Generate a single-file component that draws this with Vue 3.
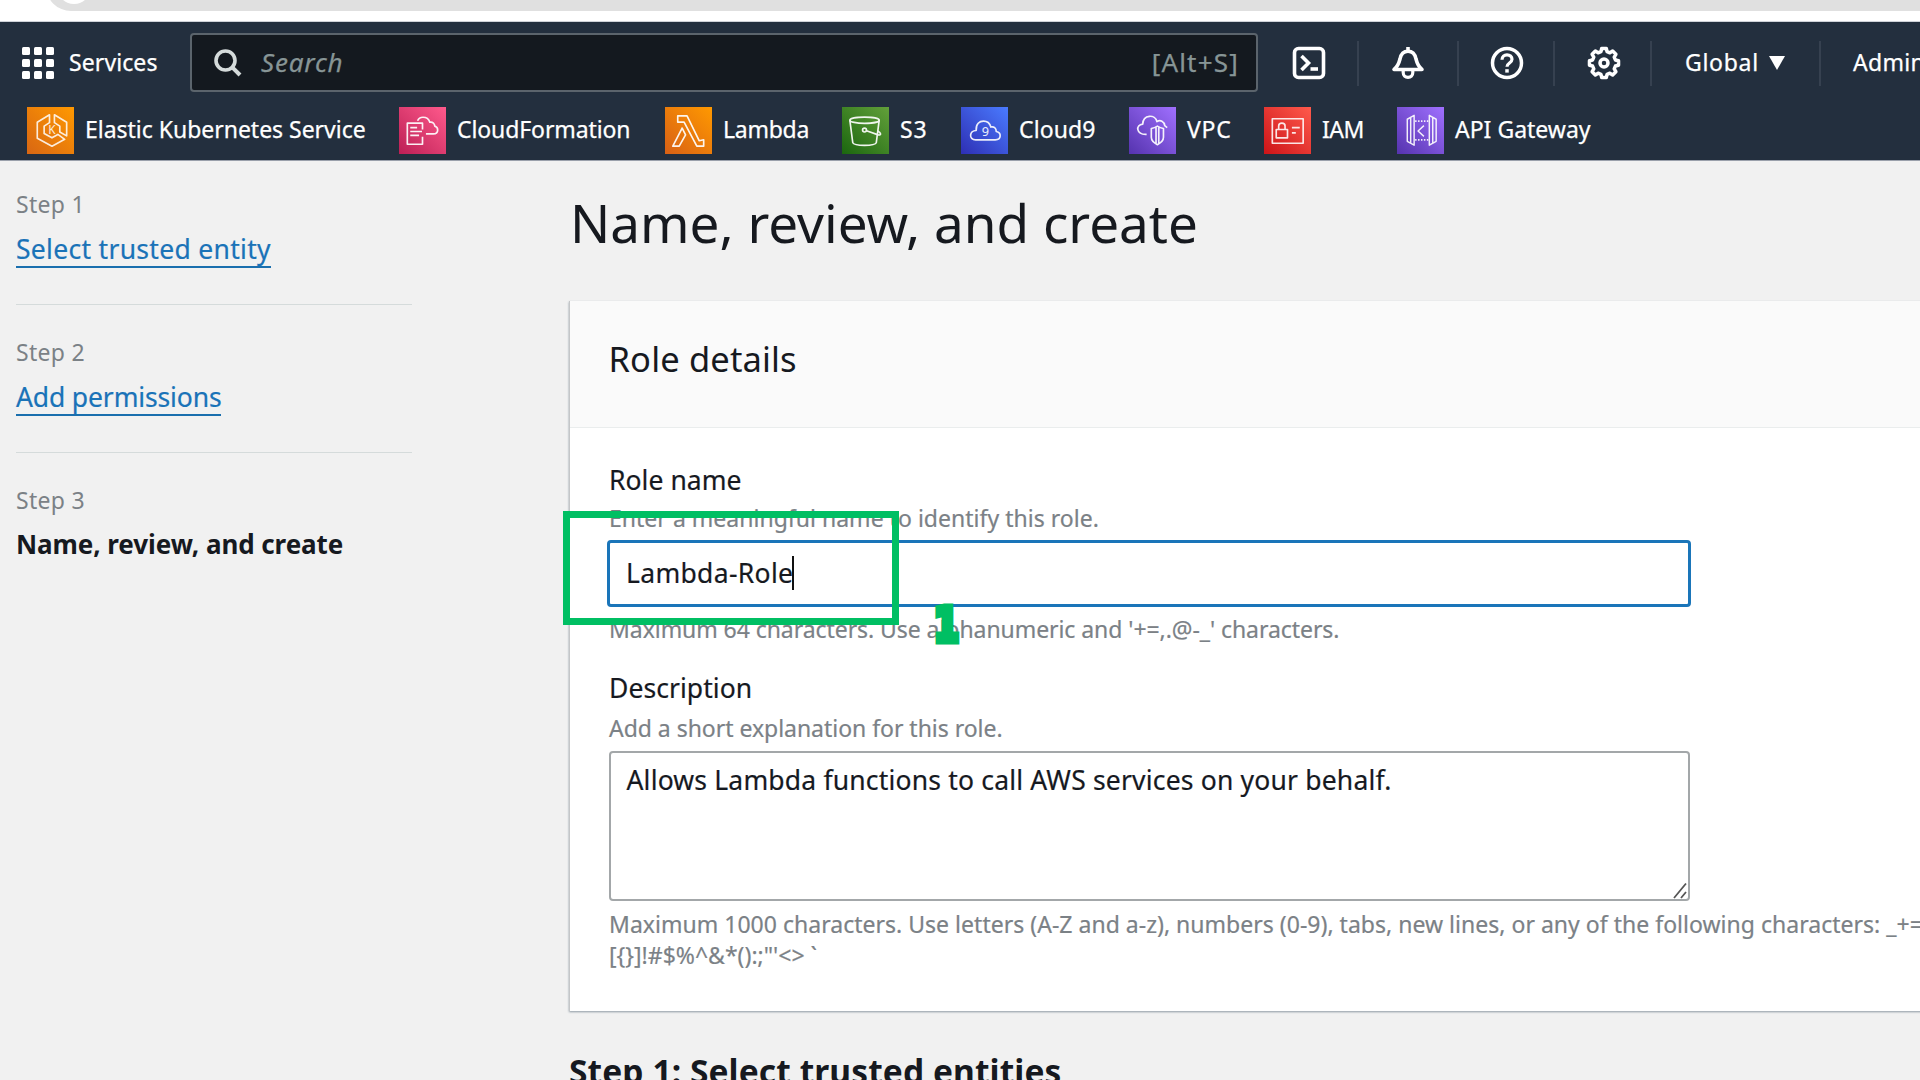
<script setup>
const services = [
  { key: 'eks', label: 'Elastic Kubernetes Service', width: 372, from: '#d86613', to: '#ff9900', spacing: -0.02 },
  { key: 'cfn', label: 'CloudFormation', width: 266, from: '#bc1f55', to: '#ff5a8c', spacing: -0.1 },
  { key: 'lambda', label: 'Lambda', width: 177, from: '#d86015', to: '#ff9900', spacing: -0.25 },
  { key: 's3', label: 'S3', width: 119, from: '#1b660f', to: '#62a03a', spacing: 0.9 },
  { key: 'cloud9', label: 'Cloud9', width: 168, from: '#2e2fb4', to: '#4a7bff', spacing: 0.1 },
  { key: 'vpc', label: 'VPC', width: 135, from: '#5533ae', to: '#a070ff', spacing: 0.8 },
  { key: 'iam', label: 'IAM', width: 133, from: '#cc1418', to: '#ff5a4c', spacing: -0.5 },
  { key: 'api', label: 'API Gateway', width: 220, from: '#5533ae', to: '#a070ff', spacing: 0 },
]

const steps = [
  { n: 1, title: 'Select trusted entity', cls: 'link' },
  { n: 2, title: 'Add permissions', cls: 'link perm' },
  { n: 3, title: 'Name, review, and create', cls: 'current' },
]

const gear = (() => {
  const pts = []
  for (let i = 0; i < 8; i++) {
    for (const [off, r] of [[-15, 11.8], [-9, 14.7], [9, 14.7], [15, 11.8]]) {
      const a = ((i * 45 + off) * Math.PI) / 180
      pts.push(`${(17 + r * Math.sin(a)).toFixed(2)},${(17 - r * Math.cos(a)).toFixed(2)}`)
    }
  }
  return pts.join(' ')
})()
</script>

<template>
  <div class="screen">
    <div class="browser"><div class="omnibox"><span class="omni-dot"></span></div></div>

    <header class="nav">
      <div class="nav-top">
        <div class="menu">
          <div class="grid9"><i v-for="n in 9" :key="n"></i></div>
          <span class="menu-label">Services</span>
        </div>
        <div class="search">
          <svg class="mag" width="28" height="28" viewBox="0 0 28 28" fill="none" stroke="#d5dbdb" stroke-width="3.6">
            <circle cx="11.5" cy="11.5" r="9.5" /><path d="M18.3 18.3L26 26" stroke-width="4" />
          </svg>
          <span class="placeholder">Search</span>
          <span class="shortcut">[Alt+S]</span>
        </div>
        <div class="tools">
          <div class="tool t-shell">
            <svg width="34" height="34" viewBox="0 0 34 34" fill="none" stroke="#fff" stroke-width="3.6">
              <rect x="2.5" y="2.5" width="29" height="29" rx="4" />
              <path d="M9.5 10l7 7-7 7" /><path d="M18.5 23h7.5" />
            </svg>
          </div>
          <div class="tool t-bell">
            <svg width="34" height="34" viewBox="0 0 34 34" fill="none" stroke="#fff" stroke-width="3.6" stroke-linejoin="round">
              <path d="M17 1v4" />
              <path d="M3 23.500h28c-4-3-5-6.500-6-10.500C24 8 21.500 5.300 17 5.300S10 8 9 13c-1 4-2 7.500-6 10.500z" />
              <path d="M12.200 25v1.500c0 3 2 4.800 4.800 4.800s4.800-1.800 4.800-4.800V25" stroke-width="3.200" />
            </svg>
          </div>
          <div class="tool t-help">
            <svg width="34" height="34" viewBox="0 0 34 34" fill="none" stroke="#fff" stroke-width="3.500">
              <circle cx="17" cy="17" r="14.500" />
              <path d="M12 13.800c0-3.200 2.200-5 5-5s5 1.800 5 4.500c0 3.700-5 3.700-5 7.400" stroke-width="3.200" /><path d="M17 23.200v3.400" />
            </svg>
          </div>
          <div class="tool t-gear">
            <svg width="34" height="34" viewBox="0 0 34 34" fill="none" stroke="#fff" stroke-width="3.500" stroke-linejoin="round">
              <polygon :points="gear" /><circle cx="17" cy="17" r="4" />
            </svg>
          </div>
          <div class="tool t-region">
            <span class="region">Global</span><i class="tri"></i>
          </div>
          <div class="tool t-user"><span class="user">Admin</span></div>
        </div>
      </div>

      <div class="favs">
        <div v-for="s in services" :key="s.key" class="fav" :style="{ width: s.width + 'px' }">
          <svg class="fav-icon" width="47" height="47" viewBox="0 0 48 48" fill="none" stroke="#fff" stroke-width="1.700" stroke-linejoin="round">
            <defs>
              <linearGradient :id="'g-' + s.key" x1="0" y1="1" x2="1" y2="0">
                <stop offset="0" :stop-color="s.from" /><stop offset="1" :stop-color="s.to" />
              </linearGradient>
            </defs>
            <rect width="48" height="48" :fill="'url(#g-' + s.key + ')'" stroke="none" />
            <g v-if="s.key === 'eks'" opacity=".85">
              <path d="M23 8L10.500 15.500V32L25.500 40L38.500 33L31.500 28L25.500 31.500L17.500 27V19.500L23 16Z" />
              <path d="M28 8L40.500 15.500V29.500L33.500 25.500V19.500L28 16Z" />
              <text x="25.500" y="28" class="glyph" font-size="12">K</text>
            </g>
            <g v-else-if="s.key === 'cfn'" opacity=".92">
              <path d="M24 23V16.500H8.500V38H24V30.500" />
              <path d="M11.500 21h7M11.500 25h12M11.500 29h9" />
              <path d="M19 14c1-2.500 3-3.500 5.500-3.500 3.500 0 6 2 7 5 3-.5 5 1.500 5 4 2 .5 3 2 3 4 0 2.500-1.800 4-4.500 4H27.500" />
            </g>
            <g v-else-if="s.key === 'lambda'" opacity=".92">
              <path d="M13 9H22.500L35 34.500L39.500 33.500V40H32.500L19.500 15.500H13Z" />
              <path d="M17.500 21.500L8 40H14.500L21 28.500Z" />
            </g>
            <g v-else-if="s.key === 's3'" opacity=".92">
              <ellipse cx="23" cy="13.500" rx="15" ry="3.200" />
              <path d="M8 13.500L11 36.500C12.500 40 33.500 40 35 36.500L38 13.500" />
              <circle cx="23" cy="23.500" r="2" /><path d="M25 24.200L37 28.500C40.500 29 40 26.500 36.500 24.500" />
            </g>
            <g v-else-if="s.key === 'cloud9'" opacity=".9">
              <path d="M15 33.500C7.500 33.500 8.500 24 15.500 24C15 17 19 14.500 23 14.500C27 14.500 29.500 17 30.500 20.500C33.500 19.500 36 21.500 36 25C41.500 26 41.500 33.500 35 33.500Z" />
              <text x="25" y="29.500" class="glyph" font-size="13">9</text>
            </g>
            <g v-else-if="s.key === 'vpc'" opacity=".92">
              <path d="M18 28C7 28.500 6.500 18 14 17.500C14.500 7 27 7.500 28.500 15C32 12.500 36 15 36.500 19L39 21" />
              <path d="M29 19.500C26.500 21 25 21.500 22.800 22V31C22.800 35 26 37 29 38.500C32 37 35.200 35 35.200 31V22C33 21.500 31.500 21 29 19.500ZM27.600 21V37M30.400 21V37" />
            </g>
            <g v-else-if="s.key === 'iam'" opacity=".88">
              <rect x="8.500" y="12" width="31.500" height="25" />
              <rect x="12.500" y="23" width="11.500" height="8.500" />
              <path d="M15 23V19.500C15 15.500 21.500 15.500 21.500 19.500V23M28.500 21H36.500M28.500 26.500H32.500" />
            </g>
            <g v-else opacity=".9">
              <path d="M10.500 12.500L17.500 8.500V39L10.500 35ZM14 11V37M40 12.500L33 8.500V39L40 35ZM36.500 11V37M27.500 19L21.500 24.500L27.500 30" stroke-width="1.500" />
              <path d="M18.500 14.500H33M18.500 33.500H33" stroke-dasharray="1.500 1.500" />
            </g>
          </svg>
          <span class="fav-label" :style="{ letterSpacing: s.spacing + 'px' }">{{ s.label }}</span>
        </div>
      </div>
    </header>

    <div class="content">
      <aside class="steps">
        <div v-for="s in steps" :key="s.n" class="step">
          <div class="step-no">Step {{ s.n }}</div>
          <span :class="s.cls">{{ s.title }}</span>
        </div>
      </aside>

      <main class="main">
        <h1>Name, review, and create</h1>
        <section class="card">
          <div class="card-head"><h2>Role details</h2></div>
          <div class="card-body">
            <label class="label role">Role name</label>
            <p class="hint h-enter">Enter a meaningful name to identify this role.</p>
            <div class="input"><span class="value">Lambda-Role</span><i class="caret"></i></div>
            <p class="hint h-max">Maximum 64 characters. Use alphanumeric and '+=,.@-_' characters.</p>
            <label class="label desc">Description</label>
            <p class="hint h-add">Add a short explanation for this role.</p>
            <div class="textarea">
              <span class="allows">Allows Lambda functions to call AWS services on your behalf.</span>
              <svg class="grip" width="14" height="17" viewBox="0 0 14 17" stroke="#555" stroke-width="1.800"><path d="M1 16L13 1.500M8 16l5-6" /></svg>
            </div>
            <p class="hint h-long">Maximum 1000 characters. Use letters (A-Z and a-z), numbers (0-9), tabs, new lines, or any of the following characters: _+=</p>
            <p class="hint h-sym">[{}]!#$%^&amp;*():;"'&lt;&gt; `</p>
          </div>
          <div class="mark-box"></div>
          <div class="mark-num">1</div>
        </section>
        <h3>Step 1: Select trusted entities</h3>
      </main>
    </div>
  </div>
</template>

<style>
body { background: #f1f1f1; overflow: hidden; }
</style>

<style scoped>
.screen { width: 1920px; height: 1080px; overflow: hidden; background: #f1f1f1; font-family: "Noto Sans", "Open Sans", sans-serif; color: #16191f; font-size: 26.5px; line-height: 34px; white-space: nowrap; }
.screen *, .screen { box-sizing: border-box; }
h1, h2, h3, p { margin: 0; font-weight: 400; }
.browser { height: 22px; background: #fff; border-bottom: 1px solid #cfd2d8; overflow: hidden; }
.omnibox { position: relative; width: 1960px; height: 50px; margin: -39px 0 0 46px; border-radius: 25px; background: #e0e0e0; }
.omni-dot { position: absolute; left: 11px; top: 9px; width: 34px; height: 34px; border-radius: 50%; background: #fff; }
.nav { height: 139px; background: #232f3e; border-bottom: 1px solid #9aa0ab; color: #fff; font-size: 23px; -webkit-text-stroke: 0.25px currentColor; }
.nav-top { height: 81px; padding-top: 11px; display: flex; align-items: flex-start; }
.menu { width: 190px; height: 60px; padding-left: 22px; display: flex; align-items: center; gap: 15px; }
.menu-label { letter-spacing: 0.1px; padding-bottom: 3px; }
.grid9 { width: 32px; height: 32px; display: grid; grid-template-columns: repeat(3, 8px); gap: 4px; }
.grid9 i { background: #fff; border-radius: 1.5px; height: 8px; }
.search { width: 1068px; height: 59px; border: 2px solid #5b646c; border-radius: 4px; background: #14191f; display: flex; align-items: center; padding: 0 17px 0 22px; font-size: 26px; color: #879596; }
.placeholder { font-style: italic; margin-left: 19px; letter-spacing: 0.8px; padding-bottom: 2px; }
.shortcut { margin-left: auto; letter-spacing: 1.2px; padding-bottom: 2px; }
.tools { display: flex; align-items: center; height: 60px; }
.tool { height: 45px; display: flex; align-items: center; border-right: 2px solid #364150; }
.tool svg { display: block; }
.t-shell { width: 101px; padding-left: 34px; }
.t-bell { width: 100px; padding-left: 32px; }
.t-help { width: 96px; padding-left: 31px; }
.t-gear { width: 97px; padding-left: 32px; }
.t-region { width: 169px; padding-left: 33px; }
.t-user { width: 99px; padding-left: 32px; border: 0; overflow: hidden; }
.region { letter-spacing: 0.7px; padding-bottom: 2px; }
.user { letter-spacing: 0.3px; padding-bottom: 2px; }
.tri { margin-left: 10px; border: 8px solid transparent; border-top: 14px solid #fff; border-bottom: 0; }
.favs { display: flex; padding: 4px 0 0 27px; }
.fav { display: flex; align-items: center; flex: none; }
.fav-icon { flex: none; margin-right: 11px; }
.fav-label { padding-bottom: 3px; }
.glyph { fill: #fff; stroke: none; text-anchor: middle; }
.content { display: flex; }
.steps { width: 569px; padding: 28px 0 0 16px; }
.step { width: 396px; height: 116px; border-bottom: 1px solid #d5dbdb; }
.step:last-child { border: 0; }
.step + .step { margin-top: 32px; }
.step-no { font-size: 23px; letter-spacing: 0.3px; line-height: 30px; color: #7b8186; margin-bottom: 13px; }
.link { display: inline-block; color: #1a73b8; border-bottom: 2px solid #1a6fae; line-height: 35px; height: 36px; letter-spacing: 0.3px; -webkit-text-stroke: 0.2px currentColor; }
.perm { letter-spacing: -0.14px; height: 35px; line-height: 33px; }
.current { display: block; margin-top: -1px; font-weight: 700; font-size: 26px; letter-spacing: -0.07px; }
.main { flex: 1; padding-top: 30px; min-width: 0; }
h1 { font-size: 53px; line-height: 64px; height: 110px; letter-spacing: 0; padding-left: 1px; }
.card { position: relative; height: 710px; width: 1420px; background: #fff; border-left: 1px solid #c4c6c8; box-shadow: 0 1px 2px 0 #8d99a3; }
.card-head { height: 127px; background: #fafafa; border-bottom: 1px solid #eaeded; padding: 36px 0 0 38.5px; }
h2 { font-size: 34.5px; line-height: 44px; letter-spacing: 0.15px; }
.card-body { padding: 35px 0 0 39px; display: flex; flex-direction: column; align-items: flex-start; -webkit-text-stroke: 0.2px currentColor; }
.label { height: 34px; }
.role { letter-spacing: 0.05px; }
.hint { font-size: 23px; line-height: 30px; color: #7b8186; }
.h-enter { margin-top: 5.5px; letter-spacing: 0.02px; }
.input { margin: 7px 0 0 -2px; width: 1084px; height: 67px; border: 3px solid #1a75b9; border-radius: 4px; background: #fff; padding-left: 16px; display: flex; align-items: center; }
.value { letter-spacing: 0.32px; }
.caret { width: 2px; height: 34px; margin-left: -1px; background: #111; }
.h-max { margin-top: 7px; letter-spacing: -0.06px; }
.desc { margin-top: 27.5px; letter-spacing: 0.05px; }
.h-add { margin-top: 7.5px; letter-spacing: -0.03px; }
.textarea { position: relative; margin: 8px 0 0 0; width: 1081px; height: 150px; border: 2px solid #a3a7a9; border-radius: 4px; padding: 10.5px 0 0 15.5px; }
.allows { letter-spacing: 0.18px; }
.grip { position: absolute; right: 1px; bottom: 0; }
.h-long { margin-top: 8px; letter-spacing: 0.02px; }
.h-long, .h-sym { line-height: 31px; }
.mark-box { position: absolute; left: -7px; top: 210px; width: 336px; height: 114px; border: 7px solid #00bf63; }
.mark-num { position: absolute; left: 364px; top: 294px; font: 700 46px/60px "DejaVu Sans", sans-serif; color: #00bf63; -webkit-text-stroke: 7px #00bf63; transform: scaleX(.78); transform-origin: left; }
h3 { font-size: 33.5px; line-height: 44px; font-weight: 700; margin-top: 38px; letter-spacing: 0.1px; }
</style>
